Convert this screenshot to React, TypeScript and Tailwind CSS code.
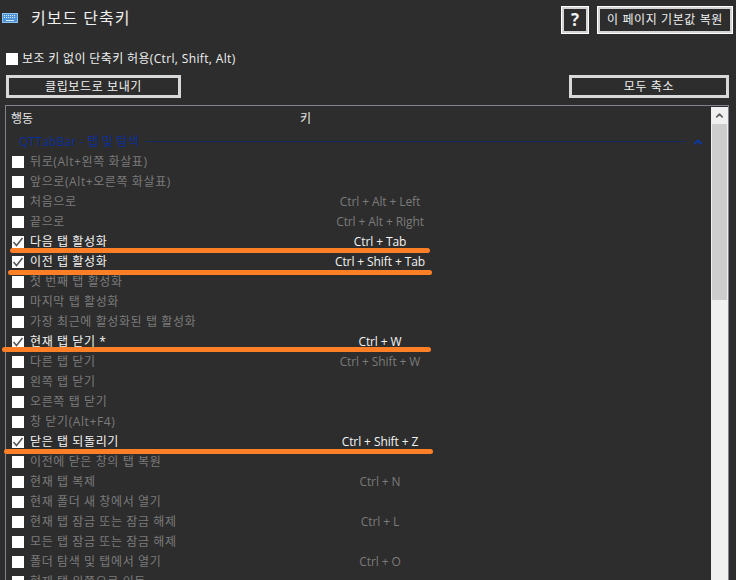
import { ChevronUp } from 'lucide-react'

const rows: { label: string; keys?: string; on?: boolean }[] = [
  { label: '뒤로(Alt+왼쪽 화살표)' },
  { label: '앞으로(Alt+오른쪽 화살표)' },
  { label: '처음으로', keys: 'Ctrl + Alt + Left' },
  { label: '끝으로', keys: 'Ctrl + Alt + Right' },
  { label: '다음 탭 활성화', keys: 'Ctrl + Tab', on: true },
  { label: '이전 탭 활성화', keys: 'Ctrl + Shift + Tab', on: true },
  { label: '첫 번째 탭 활성화' },
  { label: '마지막 탭 활성화' },
  { label: '가장 최근에 활성화된 탭 활성화' },
  { label: '현재 탭 닫기 *', keys: 'Ctrl + W', on: true },
  { label: '다른 탭 닫기', keys: 'Ctrl + Shift + W' },
  { label: '왼쪽 탭 닫기' },
  { label: '오른쪽 탭 닫기' },
  { label: '창 닫기(Alt+F4)' },
  { label: '닫은 탭 되돌리기', keys: 'Ctrl + Shift + Z', on: true },
  { label: '이전에 닫은 창의 탭 복원' },
  { label: '현재 탭 복제', keys: 'Ctrl + N' },
  { label: '현재 폴더 새 창에서 열기' },
  { label: '현재 탭 잠금 또는 잠금 해제', keys: 'Ctrl + L' },
  { label: '모든 탭 잠금 또는 잠금 해제' },
  { label: '폴더 탐색 및 탭에서 열기', keys: 'Ctrl + O' },
  { label: '현재 탭 왼쪽으로 이동' },
]

function Box({ on }: { on?: boolean }) {
  return (
    <span className="w-[12px] h-[12px] bg-white flex items-center justify-center shrink-0">
      {on && (
        <svg width="12" height="12" viewBox="0 0 12 12" fill="none">
          <path d="M1.5 6 L4.5 9.5 L10.5 2" stroke="#555" strokeWidth="1.5" />
        </svg>
      )}
    </span>
  )
}

function KeyboardIcon() {
  return (
    <svg width="16" height="10" viewBox="0 0 16 10" className="ml-[2px] mt-[13px] shrink-0">
      <rect x="0.5" y="0.5" width="15" height="9" fill="#4f93d8" stroke="#8cc0ee" />
      <path d="M2 2.5h12M2 4.5h12" stroke="#d8ecff" strokeWidth="1" strokeDasharray="1 1" />
      <path d="M4 7.5h8" stroke="#d8ecff" strokeWidth="1" />
    </svg>
  )
}

function Btn({ className, children }: { className: string; children: React.ReactNode }) {
  return (
    <button type="button" className={'flex items-center justify-center bg-[#2d2d2d] text-[#f0f0f0] ' + className}>
      {children}
    </button>
  )
}

export default function App() {
  return (
    <div className="relative w-[736px] h-[580px] overflow-hidden bg-[#2d2d2d] text-white text-[12px] font-['Open_Sans','Noto_Sans_CJK_KR',sans-serif]">
      {/* Title bar */}
      <div className="flex items-start h-[75px]">
        <KeyboardIcon />
        <span className="ml-[13px] mt-[5px] text-[16px] leading-[26px] tracking-[1px] text-[#f0f0f0]">키보드 단축키</span>
        <div className="ml-auto mt-[6px] mr-[3px] flex gap-[8px]">
          <Btn className="w-[28px] h-[28px] border-[3px] border-[#d4d4d4] outline outline-1 -outline-offset-1 outline-white text-[17px] font-bold text-[#dcdcdc]">?</Btn>
          <Btn className="w-[136px] h-[28px] border-[3px] border-[#d4d4d4] outline outline-1 -outline-offset-1 outline-white tracking-[0.6px]">이 페이지 기본값 복원</Btn>
        </div>
      </div>

      {/* Options */}
      <div className="absolute left-[6px] top-[53px] flex items-center gap-[4px] h-[12px]">
        <Box />
        <span className="text-[#f0f0f0] tracking-[0.35px]">보조 키 없이 단축키 허용(Ctrl, Shift, Alt)</span>
      </div>

      <div className="flex justify-between pl-[6px] pr-[7px]">
        <Btn className="w-[175px] h-[23px] border-[3px] border-[#d8d8d8] tracking-[0.6px]">클립보드로 보내기</Btn>
        <Btn className="w-[160px] h-[23px] border-[3px] border-[#d8d8d8] tracking-[0.6px]">모두 축소</Btn>
      </div>

      {/* Shortcut list */}
      <div className="ml-[5px] mt-[7px] w-[724px] h-[480px] border-t border-l border-r border-[#82828a] flex">
        <div className="flex-1 min-w-0">
          <div className="flex h-[25px] items-center pl-[5px] text-[#e8e8e8]">
            <span className="w-[289px]">행동</span>
            <span>키</span>
          </div>
          <div className="flex h-[21px] items-center pl-[13px] pr-[7px] text-[#0b2f9c]">
            <span className="tracking-[0.2px]">QTTabBar - 탭 및 탐색</span>
            <span className="flex-1 h-px bg-[#16295f] mx-[6px]" />
            <ChevronUp size={12} strokeWidth={4} className="text-[#0a3aa8]" />
          </div>
          {rows.map((r) => (
            <div key={r.label} className={'flex h-[20px] items-center pl-[6px] ' + (r.on ? 'text-[#f4f4f4]' : 'text-[#7b7b7b]')}>
              <Box on={r.on} />
              <span className="ml-[6px] w-[288px] tracking-[0.6px] whitespace-nowrap">{r.label}</span>
              <span className="w-[136px] text-center -ml-[6px] tracking-[-0.1px] whitespace-nowrap">{r.keys}</span>
            </div>
          ))}
        </div>
        {/* Scrollbar */}
        <div className="w-[17px] mt-[1px] bg-[#f0f0f0] flex flex-col shrink-0">
          <div className="h-[17px] flex items-center justify-center">
            <ChevronUp size={11} strokeWidth={3.5} className="text-[#606060]" />
          </div>
          <div className="h-[176px] bg-[#cdcdcd] mx-px" />
        </div>
      </div>

      {/* Orange marker strokes */}
      <div className="absolute left-[10px] top-[248px] w-[420px] h-[5px] rounded-full bg-[#ff7f27]" />
      <div className="absolute left-[8px] top-[270px] w-[424px] h-[5px] rounded-full bg-[#ff7f27]" />
      <div className="absolute left-[2px] top-[347px] w-[429px] h-[5px] rounded-full bg-[#ff7f27]" />
      <div className="absolute left-[4px] top-[449px] w-[429px] h-[5px] rounded-full bg-[#ff7f27]" />
    </div>
  )
}
